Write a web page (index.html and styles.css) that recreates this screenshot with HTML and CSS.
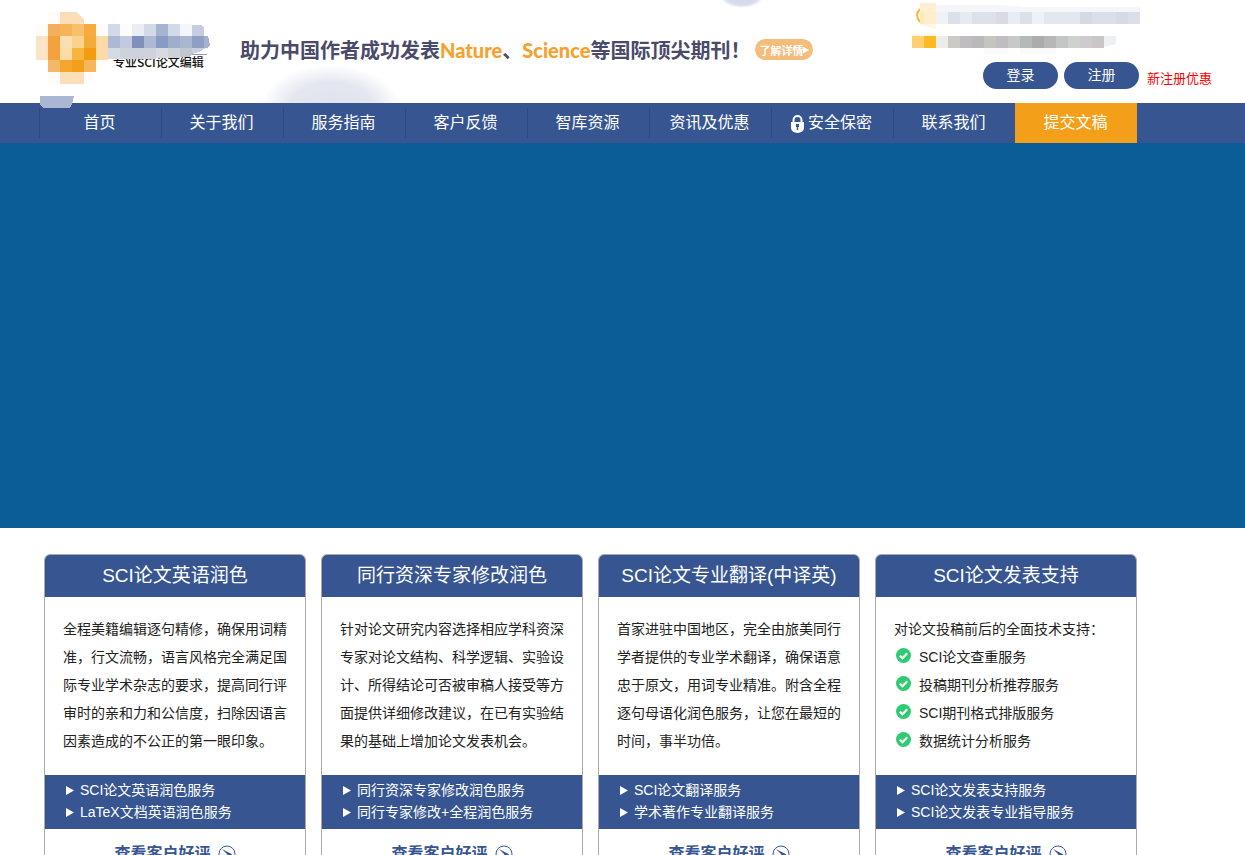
FILE: index.html
```html
<!DOCTYPE html>
<html lang="zh-CN">
<head>
<meta charset="utf-8">
<title>专业SCI论文编辑</title>
<link rel="stylesheet" href="styles.css">
</head>
<body>
<svg class="defs" aria-hidden="true">
  <symbol id="tick" viewBox="0 0 15 15"><circle cx="7.5" cy="7.5" r="7.5" fill="#2ecc71"/><path d="M3.800 7.600 6.500 10.200 11.200 5.300" fill="none" stroke="#fff" stroke-width="2.2"/></symbol>
  <symbol id="play" viewBox="0 0 8 9"><path d="M0 0 8 4.500 0 9Z" fill="#fff"/></symbol>
  <symbol id="more" viewBox="0 0 18 18"><circle cx="9" cy="9" r="8" fill="none" stroke="#375691"/><path d="M4 4 14.500 9.500 4.500 14 9.500 9.500Z" fill="#375691"/></symbol>
</svg>
<div class="page">
  <header class="header">
    <a class="logo" href="#" aria-label="首页">
      <svg width="176" height="96" viewBox="36 12 176 96" shape-rendering="crispEdges">
        <text class="logo-text" x="113" y="67">专业SCI论文编辑</text>
        <path d="M48 12h12v12H48zM36 24h12v12H36zM96 24h12v12H96zM48 72h12v12H48z" fill="#fffbf6"/>
        <path d="M60 12h17l7 8v4H60z" fill="#fbdeb7"/>
        <path d="M48 24h12v12H48z" fill="#f5af5c"/><path d="M60 24h12v12H60z" fill="#f7b456"/><path d="M72 24h12v12H72z" fill="#f7c06b"/><path d="M84 24h12v12H84z" fill="#f5ab40"/>
        <path d="M36 36h12v24H36z" fill="#fbe3c7"/><path d="M48 36h12v24H48z" fill="#f3a23d"/><path d="M60 36h12v12H60z" fill="#fadfb5"/><path d="M72 36h12v12H72z" fill="#f9d28b"/><path d="M84 36h12v12H84z" fill="#f5ab37"/><path d="M96 36h12v24H96z" fill="#fbd9a9"/>
        <path d="M60 48h12v12H60z" fill="#fbdca7"/><path d="M72 48h12v12H72z" fill="#f5b53e"/><path d="M84 48h12v12H84z" fill="#f39c12"/>
        <path d="M48 60h12v12H48z" fill="#f5b868"/><path d="M60 60h12v12H60z" fill="#f5a62e"/><path d="M72 60h12v12H72z" fill="#f39f1c"/><path d="M84 60h12v12H84z" fill="#f5b75b"/>
        <path d="M60 72h24v12H60z" fill="#fbdfb8"/><path d="M96 60h8l-6 12h-2z" fill="#fffdfa"/><path d="M84 72h12l-6 10h-6z" fill="#fffbf6"/>
        <path d="M108 24h12v12h-12zM144 24h12v12h-12zM168 24h12v12h-12z" fill="#d2d9e7"/><path d="M120 24h12v12h-12z" fill="#fcfcfd"/><path d="M132 24h12v12h-12z" fill="#eaedf3"/><path d="M156 24h12v12h-12z" fill="#a7b4cf"/><path d="M180 24h12v12h-12z" fill="#f4f6f9"/><path d="M192 25h10l2 3v8h-12z" fill="#c6cde1"/>
        <path d="M108 36h12v12h-12zM144 36h12v12h-12z" fill="#adb9d4"/><path d="M120 36h12v12h-12z" fill="#c3cadf"/><path d="M132 36h12v12h-12z" fill="#7e90bb"/><path d="M156 36h12v12h-12z" fill="#899bc2"/><path d="M168 36h12v12h-12z" fill="#a1aecb"/><path d="M180 36h12v12h-12z" fill="#abb7d1"/><path d="M192 36h12v12h-12z" fill="#8f9fc4"/><path d="M204 36h4l2 9-3 3h-3z" fill="#a5b3d0"/>
        <path d="M108 48h12v11h-12z" fill="#d4dbe7"/><path d="M120 48h36v11h-36z" fill="#cdd2dc"/><path d="M156 48h12v10h-12z" fill="#d7dade"/><path d="M168 48h12v10h-12z" fill="#cdd1d8"/><path d="M180 48h12v6l-3 3h-9z" fill="#c2c7cf"/><path d="M192 48h14l-5 3-9 3z" fill="#c8cfdf"/>
        <path d="M192 54h15v1h-15z" fill="#8fa0c6"/>
        <path d="M40 96h34l-2 8-2 4H43l-3-3z" fill="#a9b7d2"/>
      </svg>
    </a>
    <p class="slogan">助力中国作者成功发表<em>Nature</em>、<em>Science</em>等国际顶尖期刊！</p>
    <a class="detail" href="#">了解详情<svg width="6" height="8"><use href="#play"/></svg></a>
    <div class="account">
      <svg class="contact" width="228" height="54" viewBox="912 2 228 54" shape-rendering="crispEdges" aria-hidden="true">
        <path d="M920 9q-6 6 0 13" fill="none" stroke="#f5b942" stroke-width="2" shape-rendering="auto"/>
        <path d="M920 3h16v9h-16z" fill="#fff0d2"/><path d="M920 12h4v12h-4z" fill="#ffe8b9"/><path d="M924 12h12v12h-12z" fill="#ffedcb"/><path d="M919 24h17v5z" fill="#fff6e7"/>
        <path d="M936 5h64l28 2h112v5H936z" fill="#f4f6f9"/>
        <path d="M936 12h12v12h-12z" fill="#f0f2f4"/><path d="M948 12h12v12h-12zM1020 12h12v12h-12z" fill="#dbe0e9"/><path d="M960 12h12v12h-12z" fill="#e7ebf0"/><path d="M972 12h24v12h-24z" fill="#dce1ea"/><path d="M996 12h12v12h-12z" fill="#dadae4"/><path d="M1008 12h12v12h-12z" fill="#e9ecf5"/><path d="M1032 12h12v12h-12z" fill="#eef2f7"/><path d="M1044 12h36v12h-36z" fill="#e5e7ee"/><path d="M1080 12h12v12h-12z" fill="#d3dae4"/><path d="M1092 12h48v12h-48z" fill="#dbdfe9"/><path d="M1116 12h12v12h-12z" fill="#d5dae5"/>
        <path d="M912 33h24v3h-24z" fill="#fff9ec"/><path d="M912 36h12v12h-12z" fill="#ffcf70"/><path d="M924 36h12v12h-12z" fill="#ffb921"/><path d="M936 36h12v12h-12z" fill="#ececea"/><path d="M948 36h12v12h-12z" fill="#cbcac5"/><path d="M960 36h12v12h-12zM996 36h12v12h-12z" fill="#c0bdc0"/><path d="M972 36h12v12h-12z" fill="#b9b9b9"/><path d="M984 36h12v12h-12z" fill="#c4c5bd"/><path d="M1008 36h12v12h-12z" fill="#c8c8c9"/><path d="M1020 36h12v12h-12z" fill="#b4bab7"/><path d="M1032 36h12v12h-12z" fill="#abadab"/><path d="M1044 36h12v12h-12z" fill="#b7b7ba"/><path d="M1056 36h12v12h-12z" fill="#c3c5c6"/><path d="M1068 36h12v12h-12z" fill="#ced2cf"/><path d="M1080 36h12v12h-12z" fill="#cdcbcd"/><path d="M1092 36h12v12h-12z" fill="#cac6c6"/><path d="M1104 36h12v8l-12 3z" fill="#edf1f1"/>
        <path d="M984 48h24v6h-24zM1020 48h36v6h-36z" fill="#fafafa"/>
      </svg>
      <div class="actions">
        <button class="pill" type="button">登录</button>
        <button class="pill" type="button">注册</button>
        <a class="promo" href="#">新注册优惠</a>
      </div>
    </div>
  </header>
  <nav class="nav">
    <a href="#">首页</a><a href="#">关于我们</a><a href="#">服务指南</a><a href="#">客户反馈</a><a href="#">智库资源</a><a href="#">资讯及优惠</a>
    <a href="#"><svg class="lock" width="13" height="18" viewBox="0 0 13 18"><path d="M2.500 7V5a4 4 0 0 1 8 0v2" fill="none" stroke="#fff" stroke-width="2"/><path d="M0 7h13v6a6.500 5 0 0 1-13 0z" fill="#fff"/><path d="M5 9h3v3H7.200v3H5.800v-3H5z" fill="#375691"/></svg>安全保密</a>
    <a href="#">联系我们</a><a class="submit" href="#">提交文稿</a>
  </nav>
  <div class="hero"></div>
  <main class="cards">
    <section class="card">
      <h2>SCI论文英语润色</h2>
      <div class="body"><p>全程美籍编辑逐句精修，确保用词精准，行文流畅，语言风格完全满足国际专业学术杂志的要求，提高同行评审时的亲和力和公信度，扫除因语言因素造成的不公正的第一眼印象。</p></div>
      <ul class="links"><li><svg><use href="#play"/></svg><a href="#">SCI论文英语润色服务</a></li><li><svg><use href="#play"/></svg><a href="#">LaTeX文档英语润色服务</a></li></ul>
      <a class="more" href="#">查看客户好评<svg><use href="#more"/></svg></a>
    </section>
    <section class="card">
      <h2>同行资深专家修改润色</h2>
      <div class="body"><p>针对论文研究内容选择相应学科资深专家对论文结构、科学逻辑、实验设计、所得结论可否被审稿人接受等方面提供详细修改建议，在已有实验结果的基础上增加论文发表机会。</p></div>
      <ul class="links"><li><svg><use href="#play"/></svg><a href="#">同行资深专家修改润色服务</a></li><li><svg><use href="#play"/></svg><a href="#">同行专家修改+全程润色服务</a></li></ul>
      <a class="more" href="#">查看客户好评<svg><use href="#more"/></svg></a>
    </section>
    <section class="card">
      <h2>SCI论文专业翻译(中译英)</h2>
      <div class="body"><p>首家进驻中国地区，完全由旅美同行学者提供的专业学术翻译，确保语意忠于原文，用词专业精准。附含全程逐句母语化润色服务，让您在最短的时间，事半功倍。</p></div>
      <ul class="links"><li><svg><use href="#play"/></svg><a href="#">SCI论文翻译服务</a></li><li><svg><use href="#play"/></svg><a href="#">学术著作专业翻译服务</a></li></ul>
      <a class="more" href="#">查看客户好评<svg><use href="#more"/></svg></a>
    </section>
    <section class="card">
      <h2>SCI论文发表支持</h2>
      <div class="body"><p>对论文投稿前后的全面技术支持：</p>
        <ul class="ticks"><li><svg><use href="#tick"/></svg>SCI论文查重服务</li><li><svg><use href="#tick"/></svg>投稿期刊分析推荐服务</li><li><svg><use href="#tick"/></svg>SCI期刊格式排版服务</li><li><svg><use href="#tick"/></svg>数据统计分析服务</li></ul></div>
      <ul class="links"><li><svg><use href="#play"/></svg><a href="#">SCI论文发表支持服务</a></li><li><svg><use href="#play"/></svg><a href="#">SCI论文发表专业指导服务</a></li></ul>
      <a class="more" href="#">查看客户好评<svg><use href="#more"/></svg></a>
    </section>
  </main>
</div>
</body>
</html>
```
FILE: styles.css
```css
* { box-sizing: border-box; }
body, h2, p, ul { margin: 0; padding: 0; }
ul { list-style: none; }
a { color: inherit; text-decoration: none; }
svg { display: block; flex: none; }
body {
  font: 14px/28px "Liberation Sans", "Noto Sans CJK SC", sans-serif;
  color: #222;
  background: #fff;
}
.defs { position: absolute; width: 0; height: 0; }
.page { height: 100vh; overflow: hidden; }

.header {
  display: flex;
  align-items: flex-start;
  padding-left: 36px;
  height: 103px;
  background:
    radial-gradient(ellipse 22px 12px at 742px -4px, #d3d6e8 0, #d9dcea 75%, rgba(255, 255, 255, 0) 100%),
    radial-gradient(ellipse 70px 43px at 331px 108px, #dfe3ed 0, #e4e7f0 60%, #fff 100%);
}
.logo { position: relative; z-index: 1; margin-top: 12px; }
.logo-text { font: 500 12px "Noto Sans CJK SC", sans-serif; fill: #111; }
.slogan {
  margin: 36px 0 0 28px;
  font: 700 20px/28px Lato, "Noto Sans CJK SC", sans-serif;
  color: #4a4a6a;
  white-space: nowrap;
}
.slogan em { font-style: normal; font-weight: 900; color: #f9a02b; }
.detail {
  display: flex;
  align-items: center;
  justify-content: center;
  width: 58px;
  height: 21px;
  margin: 39px 0 0 5px;
  border-radius: 11px;
  background: #f5bd7b;
  color: #fff;
  font: 700 11px/20px "Noto Sans CJK SC", sans-serif;
  white-space: nowrap;
}
.account { flex: none; margin: 2px 33px 0 auto; }
.actions { display: flex; gap: 6px; margin: 6px 0 0 71px; }
.pill {
  width: 75px;
  height: 27px;
  padding: 0;
  border: 0;
  border-radius: 14px;
  background: #375691;
  color: #fff;
  font: 14px/27px "Liberation Sans", "Noto Sans CJK SC", sans-serif;
}
.promo { padding: 3px 0 0 2px; color: #f00; font-size: 13px; }

.nav {
  display: flex;
  padding-left: 39px;
  background: #375691;
  color: #fff;
  font-size: 16px;
}
.nav a {
  display: flex;
  align-items: center;
  justify-content: center;
  gap: 4px;
  width: 122px;
  height: 40px;
  padding-right: 1px;
  background: linear-gradient(#2d4a80, #2d4a80) 0 5px / 1px 30px no-repeat;
}
.nav .submit { background: #f49f19; }
.lock { margin-top: 2px; }
.hero { height: 385px; background: #0a5d97; }

.cards {
  display: grid;
  grid-template-columns: repeat(4, 262px);
  gap: 15px;
  padding: 26px 0 0 44px;
}
.card {
  overflow: hidden;
  border: 1px solid #aaa;
  border-radius: 6px;
}
.card h2 {
  background: #375691;
  color: #fff;
  font-size: 19px;
  font-weight: 400;
  line-height: 42px;
  text-align: center;
}
.body { min-height: 178px; padding: 18px 18px 20px; }
.ticks li { display: flex; gap: 8px; padding-left: 2px; }
.ticks svg { width: 15px; height: 15px; margin-top: 5px; }
.links {
  padding: 4px 21px 6px;
  background: #375691;
  color: #fff;
  line-height: 22px;
}
.links li { display: flex; align-items: center; gap: 6px; }
.links svg { width: 8px; height: 9px; }
.more {
  display: flex;
  align-items: center;
  justify-content: center;
  gap: 7px;
  height: 50px;
  color: #375691;
  font-size: 16px;
  font-weight: 700;
}
.more svg { width: 18px; height: 18px; }
```
